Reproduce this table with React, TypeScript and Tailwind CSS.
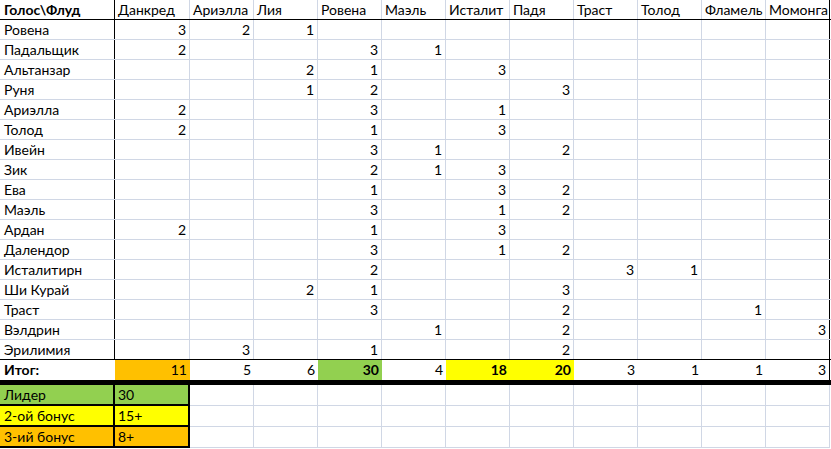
import React from "react";

const COLS = ["Данкред", "Ариэлла", "Лия", "Ровена", "Маэль", "Исталит", "Падя", "Траст", "Толод", "Фламель", "Момонга"];
const W = [75, 64, 64, 64, 64, 64, 64, 64, 64, 64, 64];

type V = number | null;
const _ = null;

const ROWS: [string, V[]][] = [
  ["Ровена",     [3, 2, 1, _, _, _, _, _, _, _, _]],
  ["Падальщик",  [2, _, _, 3, 1, _, _, _, _, _, _]],
  ["Альтанзар",  [_, _, 2, 1, _, 3, _, _, _, _, _]],
  ["Руня",       [_, _, 1, 2, _, _, 3, _, _, _, _]],
  ["Ариэлла",    [2, _, _, 3, _, 1, _, _, _, _, _]],
  ["Толод",      [2, _, _, 1, _, 3, _, _, _, _, _]],
  ["Ивейн",      [_, _, _, 3, 1, _, 2, _, _, _, _]],
  ["Зик",        [_, _, _, 2, 1, 3, _, _, _, _, _]],
  ["Ева",        [_, _, _, 1, _, 3, 2, _, _, _, _]],
  ["Маэль",      [_, _, _, 3, _, 1, 2, _, _, _, _]],
  ["Ардан",      [2, _, _, 1, _, 3, _, _, _, _, _]],
  ["Далендор",   [_, _, _, 3, _, 1, 2, _, _, _, _]],
  ["Исталитирн", [_, _, _, 2, _, _, _, 3, 1, _, _]],
  ["Ши Курай",   [_, _, 2, 1, _, _, 3, _, _, _, _]],
  ["Траст",      [_, _, _, 3, _, _, 2, _, _, 1, _]],
  ["Вэлдрин",    [_, _, _, _, 1, _, 2, _, _, _, 3]],
  ["Эрилимия",   [_, 3, _, 1, _, _, 2, _, _, _, _]],
];

const TOTALS: { v: number; bg?: string; bold?: boolean }[] = [
  { v: 11, bg: "bg-[#ffc000]" },
  { v: 5 },
  { v: 6 },
  { v: 30, bg: "bg-[#92d050]", bold: true },
  { v: 4 },
  { v: 18, bg: "bg-[#ffff00]", bold: true },
  { v: 20, bg: "bg-[#ffff00]", bold: true },
  { v: 3 },
  { v: 1 },
  { v: 1 },
  { v: 3 },
];

const LEGEND = [
  { label: "Лидер", value: "30", bg: "bg-[#92d050]" },
  { label: "2-ой бонус", value: "15+", bg: "bg-[#ffff00]" },
  { label: "3-ий бонус", value: "8+", bg: "bg-[#ffc000]" },
];

export default function App() {
  return (
    <div className="w-[831px] h-[449px] bg-white overflow-hidden font-[Lato,sans-serif] text-[14px] leading-[20px] text-black">
      {/* header */}
      <div className="flex h-[20px] border-b border-black">
        <div className="w-[115px] shrink-0 border-r border-black px-[4px] font-bold">Голос\Флуд</div>
        {COLS.map((c, i) => (
          <div
            key={c}
            style={{ width: W[i] }}
            className={`shrink-0 border-r px-[3px] whitespace-nowrap overflow-hidden ${i === 10 ? "border-black" : "border-[#d0d7e5]"}`}
          >
            {c}
          </div>
        ))}
      </div>

      {/* data rows */}
      {ROWS.map(([name, vals], r) => (
        <div key={name} className={`flex h-[20px] border-b ${r === ROWS.length - 1 ? "border-black" : "border-[#d0d7e5]"}`}>
          <div className="w-[115px] shrink-0 border-r border-black px-[4px]">{name}</div>
          {vals.map((v, i) => (
            <div
              key={i}
              style={{ width: W[i] }}
              className={`shrink-0 border-r text-right pr-[3px] ${i === 10 ? "border-black" : "border-[#d0d7e5]"}`}
            >
              {v}
            </div>
          ))}
        </div>
      ))}

      {/* totals */}
      <div className="flex h-[20px]">
        <div className="w-[115px] shrink-0 px-[4px] font-bold">Итог:</div>
        {TOTALS.map((t, i) => (
          <div
            key={i}
            style={{ width: W[i] }}
            className={`shrink-0 text-right pr-[3px] ${t.bg ?? ""} ${t.bold ? "font-bold" : ""} ${i === 10 ? "border-r border-black" : ""}`}
          >
            {t.v}
          </div>
        ))}
      </div>
      <div className="h-[5px] bg-black" />

      {/* legend */}
      {LEGEND.map((l) => (
        <div key={l.label} className="flex h-[21px]">
          <div className={`w-[115px] shrink-0 border-r-2 border-b-2 border-black px-[4px] ${l.bg}`}>{l.label}</div>
          <div className={`w-[75px] shrink-0 border-r-2 border-b-2 border-black px-[3px] ${l.bg}`}>{l.value}</div>
          {W.slice(1).map((w, i) => (
            <div key={i} style={{ width: w }} className="shrink-0 border-r border-b border-[#d0d7e5]" />
          ))}
        </div>
      ))}
    </div>
  );
}
